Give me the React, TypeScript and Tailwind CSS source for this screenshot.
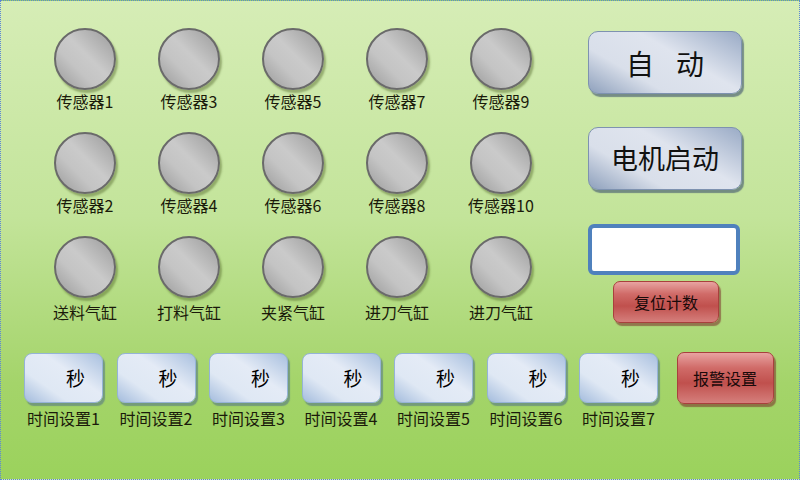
import React from 'react'

const font = { fontFamily: '"Noto Sans CJK SC", "Noto Sans", sans-serif' }

const sensors = [
  ['传感器1', '传感器3', '传感器5', '传感器7', '传感器9'],
  ['传感器2', '传感器4', '传感器6', '传感器8', '传感器10'],
  ['送料气缸', '打料气缸', '夹紧气缸', '进刀气缸', '进刀气缸'],
]

const Lamp = ({ label, low }: { label: string; low?: boolean }) => (
  <div className="flex w-[104px] flex-col items-center">
    <div className="h-[62px] w-[62px] rounded-full border-2 border-[#6a6a6a] bg-[linear-gradient(45deg,#989898_0%,#c4c4c4_35%,#cacaca_55%,#9a9a9a_100%)] shadow-[2px_3px_2px_rgba(80,100,40,0.45)]" />
    <span className={`${low ? 'mt-[4px]' : 'mt-[1px]'} whitespace-nowrap text-[16px] leading-[20px] text-[#1a1a0a]`}>
      {label}
    </span>
  </div>
)

const BlueButton = ({ children, className }: { children: React.ReactNode; className?: string }) => (
  <div
    className={`flex h-[63px] w-[154px] items-center justify-center rounded-[10px] border border-[#7e92b0] bg-[linear-gradient(30deg,#8ea0bc_0%,#d9dfea_30%,#dfe4ee_60%,#9aabc6_100%)] text-[#111] shadow-[2px_3px_1px_rgba(60,80,110,0.6)] ${className ?? ''}`}
  >
    {children}
  </div>
)

const RedButton = ({ children, className }: { children: React.ReactNode; className?: string }) => (
  <div
    className={`flex items-center justify-center rounded-[7px] border border-[#a8403d] bg-[linear-gradient(180deg,#e8a3a1_0%,#d06b68_30%,#c0504d_60%,#d57f7c_100%)] text-[#1a0a0a] shadow-[2px_3px_1px_rgba(120,40,40,0.55)] ${className ?? ''}`}
  >
    {children}
  </div>
)

const TimeSet = ({ n }: { n: number }) => (
  <div className="flex w-[92.5px] flex-col items-start">
    <div className="flex h-[50px] w-[79px] items-center justify-end rounded-[8px] border border-[#95b3d7] bg-[linear-gradient(35deg,#a4bcdd_0%,#dfe8f4_30%,#e4ebf6_60%,#a9c0df_100%)] pr-[17px] text-[19px] text-black shadow-[2px_3px_1px_rgba(70,100,140,0.5)]">
      秒
    </div>
    <span className="mt-[5px] w-[79px] whitespace-nowrap text-center text-[16px] leading-[20px] text-[#1a1a0a]">
      时间设置{n}
    </span>
  </div>
)

export default function App() {
  return (
    <div
      style={font}
      className="flex h-[480px] w-[800px] flex-col border border-dotted border-[#5b86d6] bg-[linear-gradient(180deg,#d6edb6_0%,#c3e49a_45%,#a4d46a_80%,#9bd25c_100%)]"
    >
      <div className="flex">
        <div className="flex flex-col pl-[32px] pt-[27px]">
          {sensors.map((row, i) => (
            <div key={i} className={`flex ${i === 2 ? 'h-[117px]' : 'h-[104px]'}`}>
              {row.map((s, j) => (
                <Lamp key={j} label={s} low={i === 2} />
              ))}
            </div>
          ))}
        </div>
        <div className="ml-[35px] flex flex-col pt-[30px]">
          <BlueButton className="text-[28px]">
            <span className="tracking-[22px] pl-[22px]">自动</span>
          </BlueButton>
          <BlueButton className="mt-[33px] text-[27px]">电机启动</BlueButton>
          <div className="mt-[34px] h-[51px] w-[152px] rounded-[6px] border-4 border-[#4f81bd] bg-white" />
          <RedButton className="ml-[25px] mt-[6px] h-[42px] w-[106px] text-[16px]">复位计数</RedButton>
        </div>
      </div>
      <div className="flex pl-[23px]">
        {[1, 2, 3, 4, 5, 6, 7].map((n) => (
          <TimeSet key={n} n={n} />
        ))}
        <RedButton className="ml-[5px] -mt-[1px] h-[52px] w-[97px] text-[16px]">报警设置</RedButton>
      </div>
    </div>
  )
}
